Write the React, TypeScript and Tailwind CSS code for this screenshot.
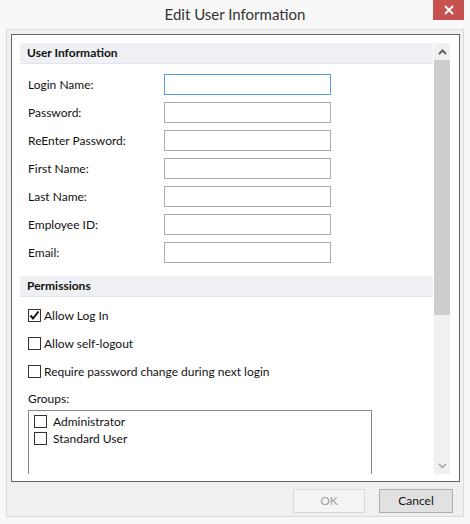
import React from 'react';

const font = { fontFamily: 'Lato, "Noto Sans", sans-serif' };

const fields = [
  'Login Name:',
  'Password:',
  'ReEnter Password:',
  'First Name:',
  'Last Name:',
  'Employee ID:',
  'Email:'
];

const Check = ({ checked }: { checked?: boolean }) => (
  <span className="flex h-[13px] w-[13px] shrink-0 items-center justify-center border border-[#333333] bg-white">
    {checked && (
      <svg width="11" height="11" viewBox="0 0 11 11">
        <path d="M1.5 5.5 L4 8.5 L9.5 1.5" fill="none" stroke="#111" strokeWidth="2" />
      </svg>
    )}
  </span>
);

const SectionHeader = ({ title }: { title: string }) => (
  <div className="flex h-[21px] shrink-0 items-center border-b border-[#e2e4ea] bg-[#eff0f4] pl-[7px] text-[12px] font-bold text-[#111]">
    {title}
  </div>
);

export default function App() {
  return (
    <div className="flex h-[524px] w-[470px] flex-col bg-[#f8f8f8] text-[12px] text-[#111]" style={font}>
      {/* title bar */}
      <div className="relative flex h-[29px] shrink-0 items-center justify-center">
        <span className="text-[15px] text-[#333]">Edit User Information</span>
        <div className="absolute right-[6px] top-0 flex h-[20px] w-[31px] items-center justify-center bg-[#c75050]">
          <svg width="10" height="10" viewBox="0 0 10 10">
            <path d="M1 1 L9 9 M9 1 L1 9" stroke="#fff" strokeWidth="1.8" />
          </svg>
        </div>
      </div>

      {/* dialog body */}
      <div className="mx-[6px] flex h-[488px] shrink-0 flex-col border border-[#dadada] bg-[#f0f0f0] pl-[4px] pt-[4px]">
        <div className="flex h-[448px] w-[449px] shrink-0 border border-[#646464] bg-white p-[8px] pr-[9px]">
          <div className="flex h-[431px] flex-1 overflow-hidden">
            <div className="flex w-[413px] flex-col">
              <SectionHeader title="User Information" />
              <div className="flex shrink-0 flex-col gap-[7px] pt-[10px]">
                {fields.map((f, i) => (
                  <div key={f} className="flex h-[21px] items-center">
                    <span className="w-[144px] pl-[8px]">{f}</span>
                    <div
                      className={
                        i === 0
                          ? 'h-[21px] w-[167px] border border-[#569de5] bg-white'
                          : 'h-[21px] w-[167px] border border-[#ababab] bg-white'
                      }
                    />
                  </div>
                ))}
              </div>
              <div className="mt-[13px] shrink-0">
                <SectionHeader title="Permissions" />
              </div>
              <div className="flex shrink-0 flex-col gap-[15px] pl-[8px] pt-[12px]">
                <label className="flex h-[13px] items-center gap-[3px]">
                  <Check checked />
                  <span>Allow Log In</span>
                </label>
                <label className="flex h-[13px] items-center gap-[3px]">
                  <Check />
                  <span>Allow self-logout</span>
                </label>
                <label className="flex h-[13px] items-center gap-[3px]">
                  <Check />
                  <span>Require password change during next login</span>
                </label>
              </div>
              <div className="shrink-0 pl-[8px] pt-[12px] leading-[17px]">Groups:</div>
              <div className="ml-[8px] mt-[3px] flex h-[80px] w-[344px] shrink-0 flex-col gap-[4px] border border-[#828790] bg-white pl-[5px] pt-[4px]">
                <div className="flex h-[13px] items-center gap-[6px]">
                  <Check />
                  <span>Administrator</span>
                </div>
                <div className="flex h-[13px] items-center gap-[6px]">
                  <Check />
                  <span>Standard User</span>
                </div>
              </div>
            </div>
            {/* scrollbar */}
            <div className="ml-[1px] flex w-[16px] flex-col bg-[#f0f0f0]">
              <div className="flex h-[17px] shrink-0 items-center justify-center">
                <svg width="9" height="6" viewBox="0 0 9 6">
                  <path d="M1 5 L4.5 1.5 L8 5" fill="none" stroke="#606060" strokeWidth="2" />
                </svg>
              </div>
              <div className="h-[255px] shrink-0 bg-[#cdcdcd]" />
              <div className="flex-1" />
              <div className="flex h-[17px] shrink-0 items-center justify-center">
                <svg width="9" height="6" viewBox="0 0 9 6">
                  <path d="M1 1 L4.5 4.5 L8 1" fill="none" stroke="#a0a0a0" strokeWidth="1.5" />
                </svg>
              </div>
            </div>
          </div>
        </div>

        {/* footer */}
        <div className="flex flex-1 items-start justify-end gap-[14px] pr-[10px] pt-[7px]">
          <button className="h-[24px] w-[72px] border border-[#d9d9d9] bg-[#f4f4f4] text-[#a0a0a0]">OK</button>
          <button className="h-[24px] w-[74px] border border-[#adadad] bg-[#e1e1e1] text-[#111]">Cancel</button>
        </div>
      </div>
    </div>
  );
}
